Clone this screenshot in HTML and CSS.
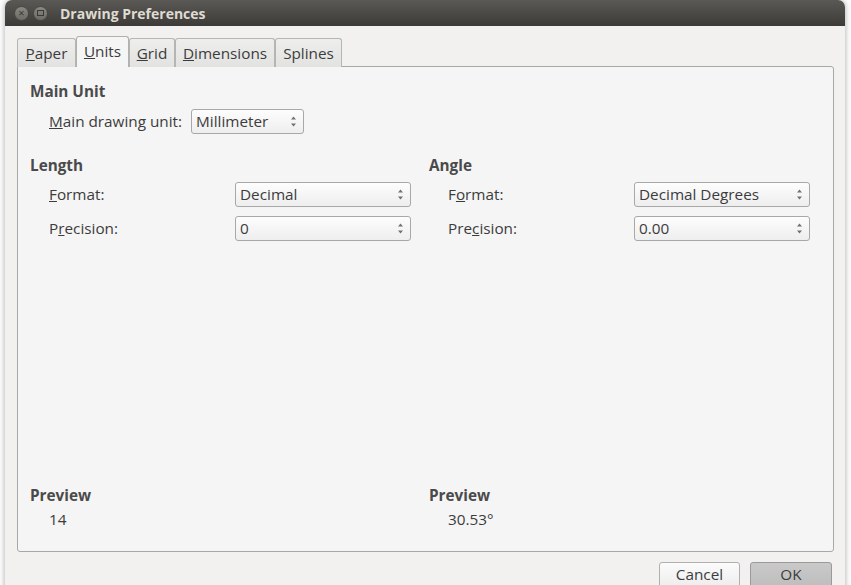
FILE: index.html
```html
<!DOCTYPE html>
<html lang="en">

<head>
    <meta charset="UTF-8">
    <title>Drawing Preferences</title>
    <link rel="stylesheet" href="styles.css">
</head>

<body>
    <div class="window">
        <div class="titlebar">
            <span class="wbtn close">&#215;</span>
            <span class="wbtn max"><i></i></span>
            <span class="title">Drawing Preferences</span>
        </div>
        <div class="client">
            <ul class="tabs">
                <li class="t-paper"><u>P</u>aper</li>
                <li class="t-units active"><u>U</u>nits</li>
                <li class="t-grid"><u>G</u>rid</li>
                <li class="t-dim"><u>D</u>imensions</li>
                <li class="t-spl">Splines</li>
            </ul>
            <div class="page">
                <h3>Main Unit</h3>
                <div class="row main-row">
                    <span class="label"><u>M</u>ain drawing unit:</span>
                    <span class="combo small">Millimeter
                        <svg class="arrows" width="7" height="11" viewBox="0 0 7 11"><path d="M3.5 0.5 L6 3.5 H1 Z M3.5 10.5 L6 7.5 H1 Z" fill="#707070"/></svg>
                    </span>
                </div>

                <div class="cols">
                    <div class="col">
                        <h3>Length</h3>
                        <div class="row">
                            <span class="label"><u>F</u>ormat:</span>
                            <span class="combo">Decimal
                                <svg class="arrows" width="7" height="11" viewBox="0 0 7 11"><path d="M3.5 0.5 L6 3.5 H1 Z M3.5 10.5 L6 7.5 H1 Z" fill="#707070"/></svg>
                            </span>
                        </div>
                        <div class="row">
                            <span class="label">P<u>r</u>ecision:</span>
                            <span class="combo">0
                                <svg class="arrows" width="7" height="11" viewBox="0 0 7 11"><path d="M3.5 0.5 L6 3.5 H1 Z M3.5 10.5 L6 7.5 H1 Z" fill="#707070"/></svg>
                            </span>
                        </div>
                    </div>
                    <div class="col">
                        <h3>Angle</h3>
                        <div class="row">
                            <span class="label">F<u>o</u>rmat:</span>
                            <span class="combo">Decimal Degrees
                                <svg class="arrows" width="7" height="11" viewBox="0 0 7 11"><path d="M3.5 0.5 L6 3.5 H1 Z M3.5 10.5 L6 7.5 H1 Z" fill="#707070"/></svg>
                            </span>
                        </div>
                        <div class="row">
                            <span class="label">Pre<u>c</u>ision:</span>
                            <span class="combo">0.00
                                <svg class="arrows" width="7" height="11" viewBox="0 0 7 11"><path d="M3.5 0.5 L6 3.5 H1 Z M3.5 10.5 L6 7.5 H1 Z" fill="#707070"/></svg>
                            </span>
                        </div>
                    </div>
                </div>

                <div class="cols previews">
                    <div class="col">
                        <h3>Preview</h3>
                        <div class="value">14</div>
                    </div>
                    <div class="col">
                        <h3>Preview</h3>
                        <div class="value">30.53°</div>
                    </div>
                </div>
            </div>
            <div class="buttons">
                <span class="btn">Cancel</span>
                <span class="btn default">OK</span>
            </div>
        </div>
    </div>
</body>

</html>
```

FILE: styles.css
```css
* {
    box-sizing: border-box;
}

body {
    margin: 0;
    background: #ffffff;
    font-family: "Open Sans", "Noto Sans", sans-serif;
    font-size: 15.3px;
    color: #3c3c3c;
    overflow: hidden;
}

.window {
    margin-left: 5px;
    width: 840px;
    height: 600px;
    border-radius: 7px 7px 0 0;
    background: #f2f1f0;
    box-shadow: 0 0 6px rgba(0, 0, 0, 0.35);
    overflow: hidden;
}

.titlebar {
    height: 26px;
    display: flex;
    align-items: center;
    padding-left: 9px;
    background: linear-gradient(#5a5955, #3c3b37);
}

.wbtn {
    width: 15px;
    height: 15px;
    border-radius: 50%;
    background: linear-gradient(#8a8883, #6d6b66);
    border: 1px solid #4a4945;
    color: #3a3935;
    font-size: 11px;
    line-height: 12px;
    text-align: center;
    margin-right: 4px;
    display: flex;
    align-items: center;
    justify-content: center;
}

.wbtn i {
    width: 7px;
    height: 6px;
    border: 1px solid #3a3935;
}

.title {
    margin-left: 8px;
    font-weight: bold;
    color: #dfdbd2;
    font-size: 14px;
}

.client {
    padding: 11px 11px 0 12px;
}

.tabs {
    list-style: none;
    margin: 0;
    padding: 0;
    display: flex;
    align-items: flex-end;
    height: 30px;
    position: relative;
    z-index: 1;
    margin-bottom: -1px;
}

.tabs li {
    height: 29px;
    padding-top: 4px;
    text-align: center;
    border: 1px solid #b5b5b3;
    border-bottom: none;
    border-radius: 3px 3px 0 0;
    background: linear-gradient(#eeeeed, #e2e2e1);
    color: #3c3c3c;
}

.tabs .t-paper { width: 59px; }
.tabs .t-units { width: 53px; }
.tabs .t-grid { width: 46px; }
.tabs .t-dim { width: 100px; }
.tabs .t-spl { width: 67px; }

.tabs li.active {
    height: 31px;
    padding-top: 4px;
    background: #f5f5f5;
    border-color: #b0b0ae;
}

.page {
    height: 486px;
    background: #f5f5f5;
    border: 1px solid #a8a8a6;
    border-radius: 0 3px 3px 3px;
    padding: 14px 12px 0 12px;
    display: flex;
    flex-direction: column;
}

h3 {
    margin: 0;
    font-size: 15.3px;
    font-weight: bold;
    color: #4a4a4a;
    height: 20px;
    line-height: 20px;
}

.row {
    display: flex;
    align-items: center;
    height: 34px;
    padding-left: 19px;
}

.main-row {
    height: 40px;
    margin-bottom: 12px;
}

.label {
    width: 186px;
}

.main-row .label {
    width: auto;
    margin-right: 9px;
}

.combo {
    width: 176px;
    height: 25px;
    line-height: 23px;
    border: 1px solid #a8a8a6;
    border-radius: 3px;
    background: linear-gradient(#fdfdfd, #eeeeee);
    padding-left: 4px;
    position: relative;
}

.combo.small {
    width: 113px;
}

.arrows {
    position: absolute;
    right: 6px;
    top: 6px;
}

.cols {
    display: grid;
    grid-template-columns: 399px 399px;
}

.cols h3 {
    height: 24px;
    line-height: 24px;
}

.previews {
    margin-top: auto;
    margin-bottom: 19px;
}

.value {
    padding-left: 19px;
    height: 25px;
    line-height: 25px;
}

.buttons {
    display: flex;
    justify-content: flex-end;
    gap: 10px;
    padding: 10px 2px 0 0;
}

.btn {
    width: 81px;
    height: 28px;
    line-height: 22px;
    text-align: center;
    border: 1px solid #b0b0ae;
    border-radius: 3px;
    background: linear-gradient(#fbfbfb, #ececec);
    color: #3c3c3c;
}

.btn.default {
    width: 82px;
    background: linear-gradient(#c9c9c9, #bdbdbd);
    border-color: #9a9a9a;
}
```
